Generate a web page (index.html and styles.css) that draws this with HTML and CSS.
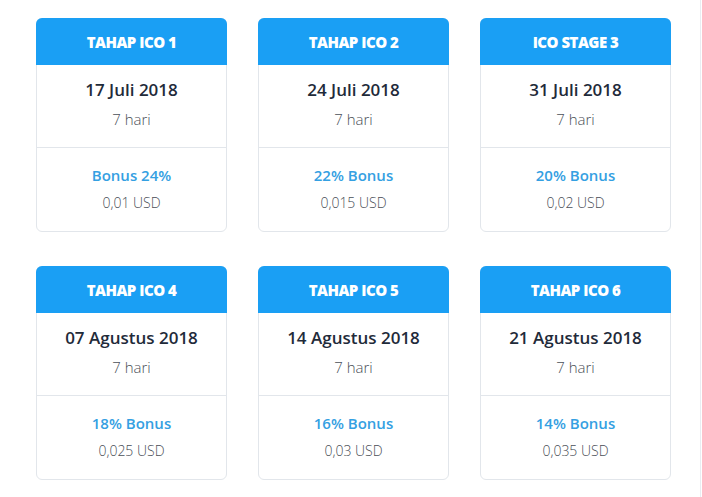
FILE: index.html
```html
<!DOCTYPE html>
<html>
<head>
<meta charset="utf-8">
<link rel="stylesheet" href="styles.css">
</head>
<body>
<div class="page">
  <div class="grid">
    <div class="card">
      <div class="card-head">TAHAP ICO 1</div>
      <div class="card-mid"><div class="date">17 Juli 2018</div><div class="dur">7 hari</div></div>
      <div class="card-foot"><div class="bonus">Bonus 24%</div><div class="price">0,01 USD</div></div>
    </div>
    <div class="card">
      <div class="card-head">TAHAP ICO 2</div>
      <div class="card-mid"><div class="date">24 Juli 2018</div><div class="dur">7 hari</div></div>
      <div class="card-foot"><div class="bonus">22% Bonus</div><div class="price">0,015 USD</div></div>
    </div>
    <div class="card">
      <div class="card-head">ICO STAGE 3</div>
      <div class="card-mid"><div class="date">31 Juli 2018</div><div class="dur">7 hari</div></div>
      <div class="card-foot"><div class="bonus">20% Bonus</div><div class="price">0,02 USD</div></div>
    </div>
    <div class="card">
      <div class="card-head">TAHAP ICO 4</div>
      <div class="card-mid"><div class="date">07 Agustus 2018</div><div class="dur">7 hari</div></div>
      <div class="card-foot"><div class="bonus">18% Bonus</div><div class="price">0,025 USD</div></div>
    </div>
    <div class="card">
      <div class="card-head">TAHAP ICO 5</div>
      <div class="card-mid"><div class="date">14 Agustus 2018</div><div class="dur">7 hari</div></div>
      <div class="card-foot"><div class="bonus">16% Bonus</div><div class="price">0,03 USD</div></div>
    </div>
    <div class="card">
      <div class="card-head">TAHAP ICO 6</div>
      <div class="card-mid"><div class="date">21 Agustus 2018</div><div class="dur">7 hari</div></div>
      <div class="card-foot"><div class="bonus">14% Bonus</div><div class="price">0,035 USD</div></div>
    </div>
  </div>
</div>
</body>
</html>
```
FILE: styles.css
```css
html, body {
  margin: 0;
  padding: 0;
  background: #ffffff;
}
body {
  font-family: "Open Sans", "DejaVu Sans", sans-serif;
  width: 702px;
  height: 497px;
  overflow: hidden;
}
.page {
  width: 701px;
  height: 497px;
  border-right: 1px solid #e9edf2;
  padding: 18px 0 0 36px;
  box-sizing: border-box;
}
.grid {
  display: grid;
  grid-template-columns: repeat(3, 191px);
  column-gap: 31px;
  row-gap: 34px;
}
.card {
  height: 214px;
  box-sizing: border-box;
  border: 1px solid #e2e6eb;
  border-radius: 6px;
  text-align: center;
  display: flex;
  flex-direction: column;
}
.card-head {
  margin: -1px -1px 0;
  height: 47px;
  background: #1a9ff4;
  border-radius: 6px 6px 0 0;
  color: #ffffff;
  font-weight: 800;
  font-size: 15px;
  letter-spacing: -0.5px;
  display: flex;
  align-items: center;
  justify-content: center;
}
.card-mid {
  padding: 14px 0 17px;
  border-bottom: 1px solid #e2e6eb;
}
.date {
  font-size: 17px;
  line-height: 22px;
  font-weight: 600;
  color: #1f2b3a;
}
.dur {
  margin-top: 7px;
  font-size: 15px;
  line-height: 22px;
  font-weight: 300;
  color: #4a4f57;
}
.card-foot {
  padding-top: 17px;
}
.bonus {
  font-size: 15px;
  line-height: 20px;
  font-weight: 600;
  color: #34a0e2;
}
.price {
  margin-top: 8px;
  font-size: 14px;
  line-height: 20px;
  font-weight: 300;
  color: #4a4f57;
}
```
